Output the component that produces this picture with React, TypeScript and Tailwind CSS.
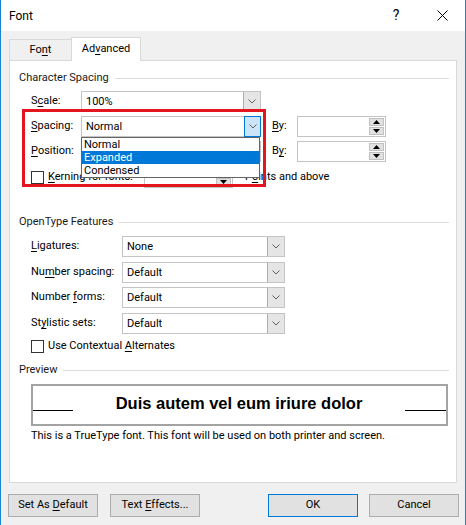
import React from 'react';

const U = ({ children }: { children: React.ReactNode }) => (
  <span className="underline decoration-1 underline-offset-[2px]">{children}</span>
);

function Chevron() {
  return (
    <svg width="8" height="5" viewBox="0 0 8 5">
      <path d="M0.5 0.5 L4 4 L7.5 0.5" fill="none" stroke="#606060" strokeWidth="1" />
    </svg>
  );
}

function Tri({ up }: { up?: boolean }) {
  return (
    <svg width="7" height="4" viewBox="0 0 7 4">
      <path d={up ? 'M0 4 L3.5 0 L7 4 Z' : 'M0 0 L3.5 4 L7 0 Z'} fill="#000" />
    </svg>
  );
}

function Combo({ value, className, active }: { value: string; className: string; active?: boolean }) {
  return (
    <div className={`flex h-[21px] border border-[#c4c4c4] bg-white ${className}`}>
      <div className="flex-1 pl-[4px] flex items-center leading-none">{value}</div>
      <div
        className={`w-[17px] flex items-center justify-center ${
          active ? 'bg-[#cce4f7] border border-[#0078d7] -my-px -mr-px' : 'bg-[#e5e5e5] border-l border-[#adadad]'
        }`}
      >
        <Chevron />
      </div>
    </div>
  );
}

function Spinner({ className }: { className: string }) {
  return (
    <div className={`flex h-[21px] border border-[#c4c4c4] bg-white ${className}`}>
      <div className="flex-1" />
      <div className="w-[16px] flex flex-col py-[1px] pr-[1px] gap-px">
        <div className="flex-1 bg-[#e1e1e1] border border-[#c0c0c0] flex items-center justify-center">
          <Tri up />
        </div>
        <div className="flex-1 bg-[#e1e1e1] border border-[#c0c0c0] flex items-center justify-center">
          <Tri />
        </div>
      </div>
    </div>
  );
}

function GroupHeader({ title, className }: { title: string; className: string }) {
  return (
    <div className={`flex items-center h-[16px] ${className}`}>
      <span className="whitespace-nowrap text-[#1a1a1a]">{title}</span>
      <div className="flex-1 h-px bg-[#dcdcdc] ml-[6px]" />
    </div>
  );
}

function CheckBox() {
  return <div className="w-[13px] h-[13px] border border-[#333] bg-white shrink-0" />;
}

function Button({ children, primary }: { children: React.ReactNode; primary?: boolean }) {
  return (
    <div
      className={`w-[90px] h-[23px] flex items-center justify-center bg-[#e1e1e1] border ${
        primary ? 'border-[#0078d7]' : 'border-[#adadad]'
      }`}
    >
      <span>{children}</span>
    </div>
  );
}

export default function App() {
  const otRows = [
    { label: <><U>L</U>igatures:</>, value: 'None', mt: 'mt-[6px]' },
    { label: <>Nu<U>m</U>ber spacing:</>, value: 'Default', mt: 'mt-[5px]' },
    { label: <>Number <U>f</U>orms:</>, value: 'Default', mt: 'mt-[4px]' },
    { label: <>St<U>y</U>listic sets:</>, value: 'Default', mt: 'mt-[5px]' },
  ];

  return (
    <div className="w-[466px] h-[525px] bg-[#f0f0f0] border-x border-[#1883d7] flex flex-col text-[11px] text-black overflow-hidden font-['Roboto',sans-serif]">
      {/* title bar */}
      <div className="h-[31px] bg-white flex items-center shrink-0">
        <span className="ml-[8px] text-[12px]">Font</span>
        <div className="ml-auto w-[46px] h-[31px] flex items-center justify-center text-[14px]">?</div>
        <div className="w-[46px] h-[31px] flex items-center justify-center">
          <svg width="11" height="11" viewBox="0 0 11 11">
            <path d="M0.5 0.5 L10.5 10.5 M10.5 0.5 L0.5 10.5" stroke="#000" strokeWidth="1" />
          </svg>
        </div>
      </div>

      {/* tabs */}
      <div className="flex items-end pl-[8px] mt-[6px] h-[23px] relative z-10">
        <div className="w-[63px] h-[21px] border border-b-0 border-[#d9d9d9] bg-[#f0f0f0] flex items-center justify-center">
          <span>Fo<U>n</U>t</span>
        </div>
        <div className="w-[70px] h-[24px] -mb-px -ml-px border border-b-0 border-[#d9d9d9] bg-white flex items-center justify-center">
          <span>Ad<U>v</U>anced</span>
        </div>
      </div>

      {/* panel */}
      <div className="ml-[8px] w-[448px] h-[423px] border border-[#d9d9d9] bg-white relative pl-[9px] pr-[7px] flex flex-col">
        <GroupHeader title="Character Spacing" className="mt-[9px]" />

        <div className="pl-[12px] flex flex-col">
          <div className="flex items-center h-[21px] mt-[5px]">
            <div className="w-[50px]">S<U>c</U>ale:</div>
            <Combo value="100%" className="w-[180px]" />
          </div>

          <div className="flex items-center h-[21px] mt-[4px] relative z-20">
            <div className="w-[50px]"><U>S</U>pacing:</div>
            <div className="relative">
              <Combo value="Normal" className="w-[180px]" active />
              <div className="absolute left-0 top-full w-[179px] border border-[#646464] bg-white flex flex-col">
                <div className="h-[13px] leading-[13px] pl-[2px]">Normal</div>
                <div className="h-[13px] leading-[13px] pl-[2px] bg-[#0078d7] text-white">Expanded</div>
                <div className="h-[13px] leading-[13px] pl-[2px]">Condensed</div>
              </div>
            </div>
            <div className="ml-[11px] w-[25px]"><U>B</U>y:</div>
            <Spinner className="w-[89px]" />
          </div>

          <div className="flex items-center h-[21px] mt-[4px]">
            <div className="w-[50px]"><U>P</U>osition:</div>
            <Combo value="Normal" className="w-[180px]" />
            <div className="ml-[11px] w-[25px]">B<U>y</U>:</div>
            <Spinner className="w-[89px]" />
          </div>

          <div className="flex items-center h-[21px] mt-[5px]">
            <CheckBox />
            <div className="ml-[4px] w-[96px] whitespace-nowrap"><U>K</U>erning for fonts:</div>
            <Spinner className="w-[89px]" />
            <div className="ml-[12px]">P<U>o</U>ints and above</div>
          </div>
        </div>

        <GroupHeader title="OpenType Features" className="mt-[26px]" />

        <div className="pl-[12px] flex flex-col">
          {otRows.map((r, i) => (
            <div key={i} className={`flex items-center h-[21px] ${r.mt}`}>
              <div className="w-[91px] whitespace-nowrap">{r.label}</div>
              <Combo value={r.value} className="w-[163px]" />
            </div>
          ))}
          <div className="flex items-center h-[16px] mt-[4px]">
            <CheckBox />
            <div className="ml-[4px]">Use Contextual <U>A</U>lternates</div>
          </div>
        </div>

        <GroupHeader title="Preview" className="mt-[8px]" />

        <div className="pl-[12px] flex flex-col">
          <div className="mt-[6px] w-[417px] h-[42px] border-2 border-[#a3a3a3] flex items-start">
            <div className="w-[40px] h-px bg-black mt-[24px]" />
            <div className="flex-1 text-center mt-[9px] leading-[17px] text-[16.5px] font-bold font-['Liberation_Sans',Arial,sans-serif]">
              Duis autem vel eum iriure dolor
            </div>
            <div className="w-[41px] h-px bg-black mt-[24px]" />
          </div>
          <div className="mt-[2px] h-[16px] flex items-center">
            This is a TrueType font. This font will be used on both printer and screen.
          </div>
        </div>

        {/* highlight frame */}
        <div className="absolute left-[12px] top-[48px] w-[244px] h-[78px] border-[3px] border-[#e3161f] z-30 pointer-events-none" />
      </div>

      {/* buttons */}
      <div className="flex items-center mt-[11px] pl-[7px] pr-[6px]">
        <Button>Set As <U>D</U>efault</Button>
        <div className="ml-[12px]">
          <Button>Text <U>E</U>ffects...</Button>
        </div>
        <div className="ml-auto flex gap-[11px]">
          <Button primary>OK</Button>
          <Button>Cancel</Button>
        </div>
      </div>
    </div>
  );
}
